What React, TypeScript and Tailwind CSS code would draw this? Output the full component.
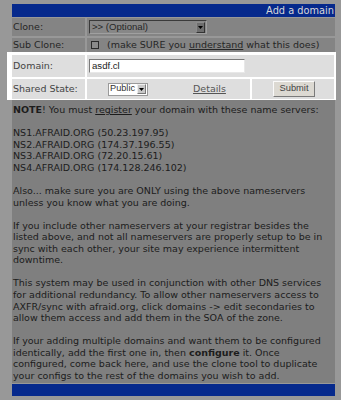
import React from "react";

const Arrow = ({ color = "#000" }: { color?: string }) => (
  <svg width="5" height="3" viewBox="0 0 5 3" className="block">
    <path d="M0 0 H5 L2.5 3 Z" fill={color} />
  </svg>
);

export default function App() {
  const lines: React.ReactNode[] = [
    <>
      <b>NOTE</b>! You must <u>register</u> your domain with these name servers:
    </>,
    "",
    "NS1.AFRAID.ORG (50.23.197.95)",
    "NS2.AFRAID.ORG (174.37.196.55)",
    "NS3.AFRAID.ORG (72.20.15.61)",
    "NS4.AFRAID.ORG (174.128.246.102)",
    "",
    "Also... make sure you are ONLY using the above nameservers",
    "unless you know what you are doing.",
    "",
    "If you include other nameservers at your registrar besides the",
    "listed above, and not all nameservers are properly setup to be in",
    "sync with each other, your site may experience intermittent",
    "downtime.",
    "",
    "This system may be used in conjunction with other DNS services",
    "for additional redundancy. To allow other nameservers access to",
    "AXFR/sync with afraid.org, click domains -> edit secondaries to",
    "allow them access and add them in the SOA of the zone.",
    "",
    "If your adding multiple domains and want them to be configured",
    <>
      identically, add the first one in, then <b>configure</b> it. Once
    </>,
    "configured, come back here, and use the clone tool to duplicate",
    "your configs to the rest of the domains you wish to add.",
  ];

  return (
    <div className="w-[341px] h-[400px] bg-[#989898] pt-[4px] overflow-hidden font-['DejaVu_Sans',sans-serif] text-[9.5px]">
      <div className="ml-[12px] w-[323px]">
        {/* header */}
        <div className="h-[13px] bg-[#06298c] flex items-center justify-end pr-[1px] text-[#d8d8d8] text-[9.8px] leading-none">
          Add a domain
        </div>
        {/* Clone row */}
        <div className="mt-[1px] h-[18px] flex gap-[2px]">
          <div className="w-[73px] bg-[#848484] pl-[1px] flex items-center text-[#262626]">Clone:</div>
          <div className="flex-1 bg-[#848484] pl-[2px] flex items-center">
            <div className="w-[118px] h-[14px] border border-t-[#3a3a3a] border-l-[#3a3a3a] border-b-[#a0a0a0] border-r-[#a0a0a0] bg-[#878787] flex items-center justify-between pr-[1px]">
              <span className="pl-[2px] font-['Liberation_Sans',sans-serif] text-[9.6px] text-[#262626] leading-none">
                &gt;&gt; (Optional)
              </span>
              <div className="w-[9px] h-[11px] bg-[#6e6e6e] border border-t-[#8c8c8c] border-l-[#8c8c8c] border-b-[#333] border-r-[#333] flex items-center justify-center">
                <Arrow />
              </div>
            </div>
          </div>
        </div>
        {/* Sub Clone row */}
        <div className="mt-[2px] h-[14px] flex gap-[2px]">
          <div className="w-[73px] bg-[#848484] pl-[1px] flex items-center text-[#262626]">Sub Clone:</div>
          <div className="flex-1 bg-[#848484] pl-[4px] flex items-center text-[#262626] whitespace-nowrap">
            <div className="w-[8px] h-[8px] border border-[#2a2a2a] bg-[#8a8a8a] mr-[8px]" />
            <span>
              (make SURE you <u>understand</u> what this does)
            </span>
          </div>
        </div>
        {/* Highlighted region */}
        <div className="-ml-[5px] w-[329px] bg-white pt-[3px] pl-[5px] pr-[2px] pb-[1px]">
          <div className="h-[22px] flex gap-[2px]">
            <div className="w-[73px] bg-[#dedede] pl-[1px] flex items-center text-[#444]">Domain:</div>
            <div className="flex-1 bg-[#dedede] pl-[2px] flex items-center">
              <div className="w-[156px] h-[14px] bg-white border border-t-[#7a7a7a] border-l-[#7a7a7a] border-b-[#e8e8e8] border-r-[#e8e8e8] flex items-center pl-[2px]">
                <span className="font-['Liberation_Sans',sans-serif] text-[9.6px] text-[#222] leading-none">asdf.cl</span>
              </div>
            </div>
          </div>
          <div className="mt-[2px] h-[20px] flex gap-[2px]">
            <div className="w-[73px] bg-[#dedede] pl-[1px] flex items-center text-[#444] whitespace-nowrap">
              Shared State:
            </div>
            <div className="w-[163px] bg-[#dedede] pl-[21px] flex items-center">
              <div className="w-[40px] h-[13px] bg-white border border-[#9a9a9a] flex items-center justify-between pr-[1px]">
                <span className="pl-[1px] font-['Liberation_Sans',sans-serif] text-[9.2px] text-[#333] leading-none">
                  Public
                </span>
                <div className="w-[9px] h-[10px] bg-[#c8c8c8] border border-t-[#eee] border-l-[#eee] border-b-[#777] border-r-[#777] flex items-center justify-center">
                  <Arrow />
                </div>
              </div>
              <span className="ml-[45px] text-[#555] underline">Details</span>
            </div>
            <div className="flex-1 bg-[#dedede] pl-[21px] flex items-center">
              <div className="w-[42px] h-[16px] bg-[#dcd9d2] border border-t-[#fafafa] border-l-[#fafafa] border-b-[#7a7a7a] border-r-[#7a7a7a] flex items-center justify-center font-['Liberation_Sans',sans-serif] text-[9.3px] text-[#444] leading-none">
                Submit
              </div>
            </div>
          </div>
        </div>
        {/* body */}
        <div className="h-[283px] bg-[#7f7f7f] pl-[1px] pt-[4px] leading-[11.57px] text-[#1c1c1c]">
          {lines.map((l, i) => (
            <div key={i} className="h-[11.57px] whitespace-nowrap">
              {l}
            </div>
          ))}
        </div>
        <div className="mt-[1px] h-[12px] bg-[#06298c]" />
      </div>
    </div>
  );
}
